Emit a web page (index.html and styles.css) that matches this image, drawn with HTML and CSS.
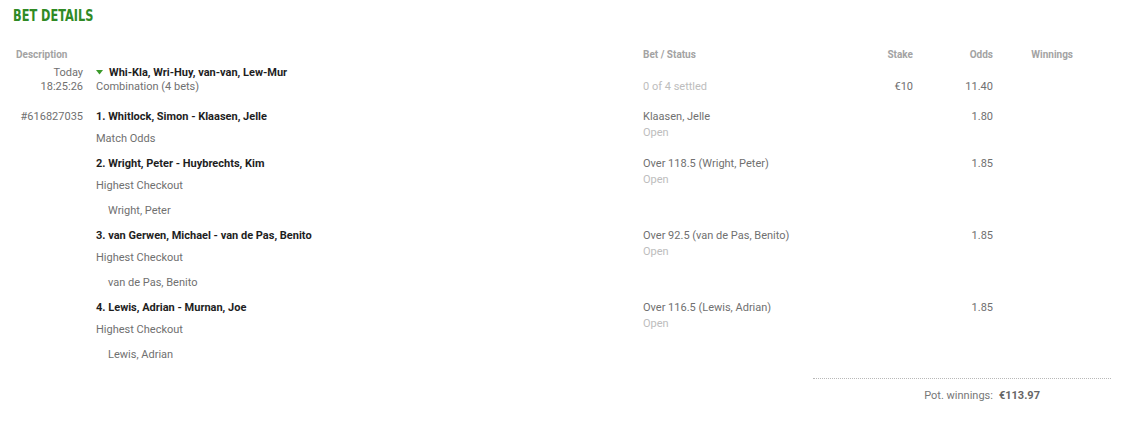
FILE: index.html
```html
<!DOCTYPE html>
<html>
<head>
<meta charset="utf-8">
<link rel="stylesheet" href="styles.css">
</head>
<body>
<div class="page">
  <h1 class="title"><span class="title-text">BET DETAILS</span></h1>
  <div class="table">
    <div class="row head">
      <div class="c1 left">Description</div>
      <div class="c2"></div>
      <div class="c3">Bet / Status</div>
      <div class="c4">Stake</div>
      <div class="c5">Odds</div>
      <div class="c6">Winnings</div>
    </div>
    <div class="row summary">
      <div class="c1 muted"><div>Today</div><div>18:25:26</div></div>
      <div class="c2">
        <div class="name"><span class="caret"><svg width="7" height="5" viewBox="0 0 7 5"><path d="M0 0H7L3.5 4.5Z" fill="#3a9a2a"/></svg></span>Whi-Kla, Wri-Huy, van-van, Lew-Mur</div>
        <div class="muted">Combination (4 bets)</div>
      </div>
      <div class="c3"><div>&nbsp;</div><div class="light">0 of 4 settled</div></div>
      <div class="c4 muted"><div>&nbsp;</div><div>€10</div></div>
      <div class="c5 muted"><div>&nbsp;</div><div>11.40</div></div>
      <div class="c6"></div>
    </div>
    <div class="row leg">
      <div class="c1 muted">#616827035</div>
      <div class="c2">
        <div class="name">1. Whitlock, Simon - Klaasen, Jelle</div>
        <div class="market">Match Odds</div>
      </div>
      <div class="c3"><div class="muted">Klaasen, Jelle</div><div class="light status">Open</div></div>
      <div class="c4"></div>
      <div class="c5 muted">1.80</div>
      <div class="c6"></div>
    </div>
    <div class="row leg">
      <div class="c1"></div>
      <div class="c2">
        <div class="name">2. Wright, Peter - Huybrechts, Kim</div>
        <div class="market">Highest Checkout</div>
        <div class="selection">Wright, Peter</div>
      </div>
      <div class="c3"><div class="muted">Over 118.5 (Wright, Peter)</div><div class="light status">Open</div></div>
      <div class="c4"></div>
      <div class="c5 muted">1.85</div>
      <div class="c6"></div>
    </div>
    <div class="row leg">
      <div class="c1"></div>
      <div class="c2">
        <div class="name">3. van Gerwen, Michael - van de Pas, Benito</div>
        <div class="market">Highest Checkout</div>
        <div class="selection">van de Pas, Benito</div>
      </div>
      <div class="c3"><div class="muted">Over 92.5 (van de Pas, Benito)</div><div class="light status">Open</div></div>
      <div class="c4"></div>
      <div class="c5 muted">1.85</div>
      <div class="c6"></div>
    </div>
    <div class="row leg">
      <div class="c1"></div>
      <div class="c2">
        <div class="name">4. Lewis, Adrian - Murnan, Joe</div>
        <div class="market">Highest Checkout</div>
        <div class="selection">Lewis, Adrian</div>
      </div>
      <div class="c3"><div class="muted">Over 116.5 (Lewis, Adrian)</div><div class="light status">Open</div></div>
      <div class="c4"></div>
      <div class="c5 muted">1.85</div>
      <div class="c6"></div>
    </div>
  </div>
  <div class="footer">
    <div class="pot"><span class="pot-label">Pot. winnings:</span><span class="pot-value">€113.97</span></div>
  </div>
</div>
</body>
</html>
```

FILE: styles.css
```css
* { box-sizing: border-box; }
html, body { margin: 0; padding: 0; background: #fff; }
body {
  font-family: Roboto, "Liberation Sans", sans-serif;
  font-size: 11px;
  line-height: 14px;
  color: #707070;
}
.page { padding: 0 16px 0 0; }
.title {
  margin: 0;
  padding: 7px 0 0 13px;
  font-family: "DejaVu Sans Condensed", "DejaVu Sans", sans-serif;
  font-stretch: condensed;
  font-weight: bold;
  font-size: 15px;
  line-height: 18px;
  height: 25px;
  color: #2f8a25;
}
.title-text {
  display: inline-block;
  transform: scaleX(0.84);
  transform-origin: left center;
}
.table { margin-top: 23px; padding-left: 16px; }
.row {
  display: grid;
  grid-template-columns: 80px 547px 210px 60px 80px 80px;
}
.c1 { text-align: right; padding-right: 13px; }
.c1.left { text-align: left; }
.c4, .c5, .c6 { text-align: right; }
.head {
  font-size: 10px;
  font-weight: bold;
  color: #a3a3a3;
}
.summary { margin-top: 4px; margin-bottom: 16px; }
.leg { padding-bottom: 11px; }
.name { color: #1e1e1e; font-weight: bold; }
.caret { display: inline-block; width: 13px; vertical-align: 1px; }
.caret svg { display: block; }
.muted { color: #707070; }
.light { color: #bdbdbd; }
.status { margin-top: 2px; }
.market { margin-top: 8px; color: #707070; }
.selection { margin-top: 11px; padding-left: 12px; color: #707070; }
.footer { display: flex; justify-content: flex-end; margin-top: 5px; }
.pot {
  width: 298px;
  border-top: 1px dotted #b8b8b8;
  padding-top: 10px;
  padding-right: 71px;
  text-align: right;
  color: #777;
}
.pot-value { font-weight: bold; color: #666; margin-left: 6px; }
```
